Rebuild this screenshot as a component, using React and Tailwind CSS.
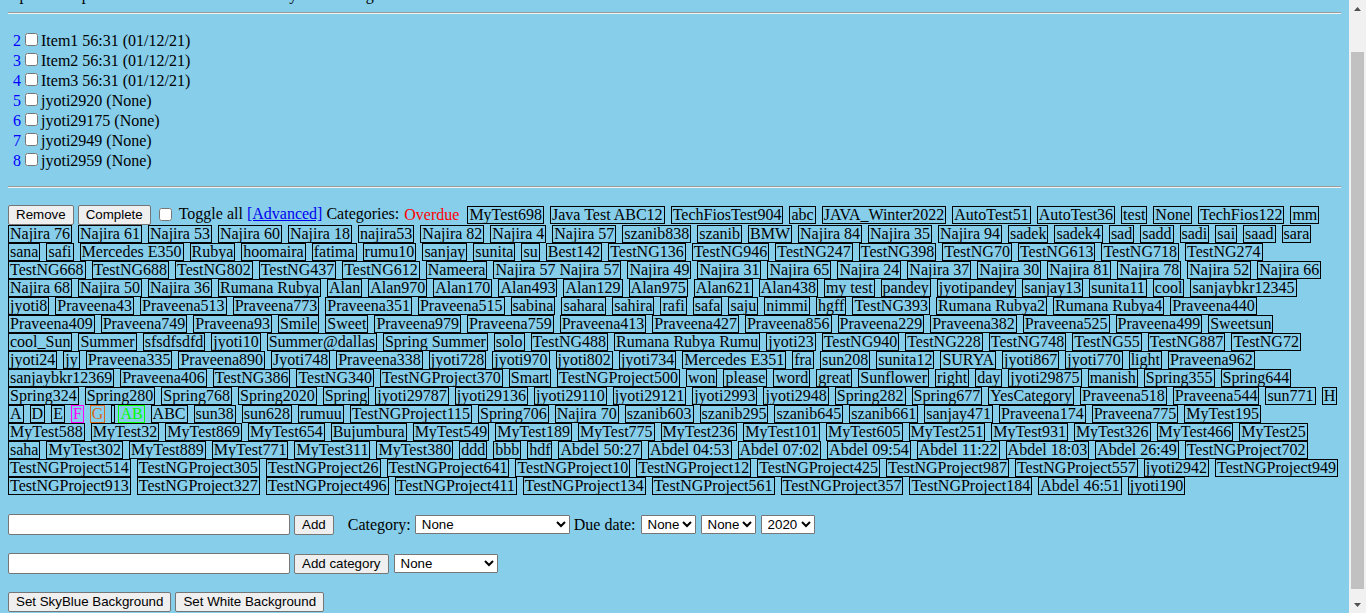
import React from "react";

const items = [
  ["2", "Item1 56:31 (01/12/21)"],
  ["3", "Item2 56:31 (01/12/21)"],
  ["4", "Item3 56:31 (01/12/21)"],
  ["5", "jyoti2920 (None)"],
  ["6", "jyoti29175 (None)"],
  ["7", "jyoti2949 (None)"],
  ["8", "jyoti2959 (None)"],
];

const firstRow = ["MyTest698", "Java Test ABC12", "TechFiosTest904", "abc", "JAVA_Winter2022", "AutoTest51", "AutoTest36", "test", "None", "TechFios122", "mm"];

const rows = [
  ["Najira 76", "Najira 61", "Najira 53", "Najira 60", "Najira 18", "najira53", "Najira 82", "Najira 4", "Najira 57", "szanib838", "szanib", "BMW", "Najira 84", "Najira 35", "Najira 94", "sadek", "sadek4", "sad", "sadd", "sadi", "sai", "saad", "sara"],
  ["sana", "safi", "Mercedes E350", "Rubya", "hoomaira", "fatima", "rumu10", "sanjay", "sunita", "su", "Best142", "TestNG136", "TestNG946", "TestNG247", "TestNG398", "TestNG70", "TestNG613", "TestNG718", "TestNG274"],
  ["TestNG668", "TestNG688", "TestNG802", "TestNG437", "TestNG612", "Nameera", "Najira 57 Najira 57", "Najira 49", "Najira 31", "Najira 65", "Najira 24", "Najira 37", "Najira 30", "Najira 81", "Najira 78", "Najira 52", "Najira 66"],
  ["Najira 68", "Najira 50", "Najira 36", "Rumana Rubya", "Alan", "Alan970", "Alan170", "Alan493", "Alan129", "Alan975", "Alan621", "Alan438", "my test", "pandey", "jyotipandey", "sanjay13", "sunita11", "cool", "sanjaybkr12345"],
  ["jyoti8", "Praveena43", "Praveena513", "Praveena773", "Praveena351", "Praveena515", "sabina", "sahara", "sahira", "rafi", "safa", "saju", "nimmi", "hgff", "TestNG393", "Rumana Rubya2", "Rumana Rubya4", "Praveena440"],
  ["Praveena409", "Praveena749", "Praveena93", "Smile", "Sweet", "Praveena979", "Praveena759", "Praveena413", "Praveena427", "Praveena856", "Praveena229", "Praveena382", "Praveena525", "Praveena499", "Sweetsun"],
  ["cool_Sun", "Summer", "sfsdfsdfd", "jyoti10", "Summer@dallas", "Spring Summer", "solo", "TestNG488", "Rumana Rubya Rumu", "jyoti23", "TestNG940", "TestNG228", "TestNG748", "TestNG55", "TestNG887", "TestNG72"],
  ["jyoti24", "jy", "Praveena335", "Praveena890", "Jyoti748", "Praveena338", "jyoti728", "jyoti970", "jyoti802", "jyoti734", "Mercedes E351", "fra", "sun208", "sunita12", "SURYA", "jyoti867", "jyoti770", "light", "Praveena962"],
  ["sanjaybkr12369", "Praveena406", "TestNG386", "TestNG340", "TestNGProject370", "Smart", "TestNGProject500", "won", "please", "word", "great", "Sunflower", "right", "day", "jyoti29875", "manish", "Spring355", "Spring644"],
  ["Spring324", "Spring280", "Spring768", "Spring2020", "Spring", "jyoti29787", "jyoti29136", "jyoti29110", "jyoti29121", "jyoti2993", "jyoti2948", "Spring282", "Spring677", "YesCategory", "Praveena518", "Praveena544", "sun771", "H"],
  ["A", "D", "E", "F", "G", "", "AB", "ABC", "sun38", "sun628", "rumuu", "TestNGProject115", "Spring706", "Najira 70", "szanib603", "szanib295", "szanib645", "szanib661", "sanjay471", "Praveena174", "Praveena775", "MyTest195"],
  ["MyTest588", "MyTest32", "MyTest869", "MyTest654", "Bujumbura", "MyTest549", "MyTest189", "MyTest775", "MyTest236", "MyTest101", "MyTest605", "MyTest251", "MyTest931", "MyTest326", "MyTest466", "MyTest25"],
  ["saha", "MyTest302", "MyTest889", "MyTest771", "MyTest311", "MyTest380", "ddd", "bbb", "hdf", "Abdel 50:27", "Abdel 04:53", "Abdel 07:02", "Abdel 09:54", "Abdel 11:22", "Abdel 18:03", "Abdel 26:49", "TestNGProject702"],
  ["TestNGProject514", "TestNGProject305", "TestNGProject26", "TestNGProject641", "TestNGProject10", "TestNGProject12", "TestNGProject425", "TestNGProject987", "TestNGProject557", "jyoti2942", "TestNGProject949"],
  ["TestNGProject913", "TestNGProject327", "TestNGProject496", "TestNGProject411", "TestNGProject134", "TestNGProject561", "TestNGProject357", "TestNGProject184", "Abdel 46:51", "jyoti190"],
];

const special = {
  F: "border-[#ff00ff] text-[#ff00ff]",
  G: "border-[#d2691e] text-[#d2691e]",
  AB: "border-[#00ff00] text-[#00ff00]",
};

function Box({ name, extra = "" }) {
  const colors = special[name] || "border-black text-black";
  const empty = name === "" ? "-mr-[3px]" : "";
  return (
    <span
      className={`h-[18px] shrink-0 whitespace-pre border px-px leading-[16px] ${colors} ${empty} ${extra}`}
    >
      {name}
    </span>
  );
}

function Btn({ children, className = "" }) {
  return (
    <button
      type="button"
      className={`flex h-[20px] shrink-0 items-center whitespace-nowrap rounded-[2px] border border-[#767676] bg-[#efefef] px-[7px] font-['Liberation_Sans',Arial,sans-serif] text-[13.333px] leading-none text-black ${className}`}
    >
      {children}
    </button>
  );
}

function Select({ value, className = "" }) {
  return (
    <select
      defaultValue={value}
      className={`h-[19px] shrink-0 rounded-[1px] border border-[#767676] bg-white pl-[2px] font-['Liberation_Sans',Arial,sans-serif] text-[13.333px] leading-none text-black ${className}`}
    >
      <option value={value}>{value}</option>
    </select>
  );
}

function Hr({ className = "" }) {
  return <div className={`h-[2px] border-t border-b border-t-[#9a9a9a] border-b-[#f4f4f4] ${className}`} />;
}

function TextInput() {
  return (
    <input
      type="text"
      className="h-[21px] w-[282px] shrink-0 rounded-[2px] border border-[#767676] bg-white px-[2px] font-['Liberation_Sans',Arial,sans-serif] text-[13.333px]"
    />
  );
}

export default function App() {
  return (
    <div className="flex h-[613px] w-[1366px] overflow-hidden bg-[#87ceeb] font-['Liberation_Serif','Times_New_Roman',serif] text-[16px] text-black">
      <div className="w-[1349px] shrink-0 overflow-hidden px-2">
        <p className="-mt-[14px] whitespace-nowrap leading-[18px]">
          Update the plan items on the list below and your own tags.
        </p>
        <Hr className="mt-2" />

        <div className="mt-[17px] pl-[5px]">
          {items.map(([n, t]) => (
            <div key={n} className="flex h-[20px] items-start whitespace-nowrap">
              <span className="leading-[20px] text-[#0000ff]">{n}</span>
              <input type="checkbox" className="ml-[4px] mr-[3px] mt-[2px] h-[13px] w-[13px] shrink-0" />
              <span className="leading-[20px]">{t}</span>
            </div>
          ))}
        </div>

        <Hr className="mt-[15px]" />

        <div className="mt-[17px] flex flex-col">
          <div className="flex h-[20px] items-start whitespace-nowrap">
            <Btn>Remove</Btn>
            <Btn className="ml-[4px]">Complete</Btn>
            <input type="checkbox" className="ml-[8px] mt-[3px] h-[13px] w-[13px] shrink-0" />
            <span className="ml-[7px] leading-[18px]">Toggle all</span>
            <a href="#" className="ml-[4px] leading-[18px] text-[#0000ee] underline">
              [Advanced]
            </a>
            <span className="ml-[4px] leading-[18px]">Categories:</span>
            <span className="ml-[3px] mt-px h-[18px] shrink-0 border border-transparent px-px leading-[16px] text-[#ff0000]">
              Overdue
            </span>
            {firstRow.map((n, i) => (
              <Box key={i} name={n} extra="ml-[6px] mt-px" />
            ))}
          </div>
          {rows.map((r, ri) => (
            <div key={ri} className="flex h-[18px] gap-x-[6px] whitespace-nowrap">
              {r.map((n, i) => (
                <Box key={i} name={n} />
              ))}
            </div>
          ))}
        </div>

        <div className="mt-[19px] flex h-[21px] items-center whitespace-nowrap">
          <TextInput />
          <Btn className="ml-[4px]">Add</Btn>
          <span className="ml-[14px] leading-[18px]">Category:</span>
          <Select value="None" className="ml-[4px] w-[155px]" />
          <span className="ml-[4px] leading-[18px]">Due date:</span>
          <Select value="None" className="ml-[5px] w-[55px]" />
          <Select value="None" className="ml-[5px] w-[55px]" />
          <Select value="2020" className="ml-[5px] w-[54px]" />
        </div>

        <div className="mt-[18px] flex h-[21px] items-center whitespace-nowrap">
          <TextInput />
          <Btn className="ml-[4px]">Add category</Btn>
          <Select value="None" className="ml-[5px] w-[104px]" />
        </div>

        <div className="mt-[18px] flex items-center whitespace-nowrap">
          <Btn className="border-[#4f4f4f] bg-[#e5e5e5]">Set SkyBlue Background</Btn>
          <Btn className="ml-[4px]">Set White Background</Btn>
        </div>
      </div>

      <div className="flex w-[17px] shrink-0 flex-col bg-[#f1f1f1]">
        <div className="flex h-[17px] items-center justify-center">
          <svg width="7" height="4" viewBox="0 0 7 4">
            <polygon points="0,4 3.5,0 7,4" fill="#505050" />
          </svg>
        </div>
        <div className="flex-1 px-[2px] pb-[7px] pt-[35px]">
          <div className="h-full bg-[#c1c1c1]" />
        </div>
        <div className="flex h-[17px] items-center justify-center">
          <svg width="7" height="4" viewBox="0 0 7 4">
            <polygon points="0,0 7,0 3.5,4" fill="#505050" />
          </svg>
        </div>
      </div>
    </div>
  );
}
